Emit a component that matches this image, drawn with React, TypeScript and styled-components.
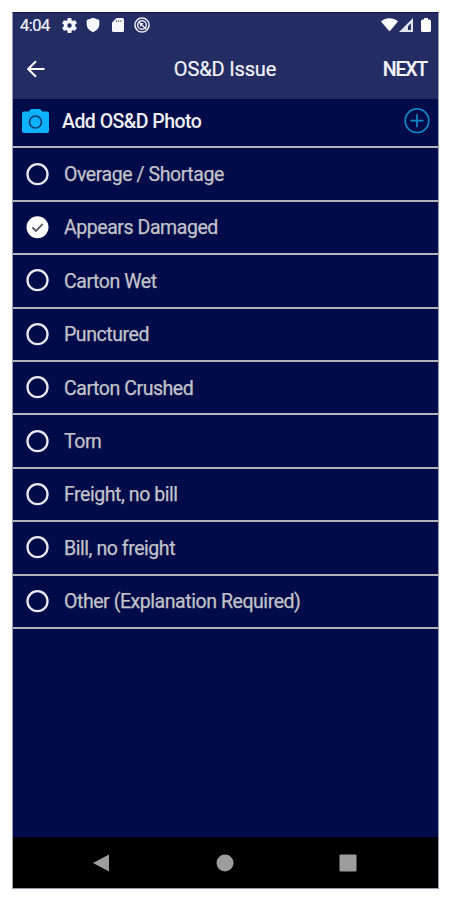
import React from 'react';
import styled, { createGlobalStyle } from 'styled-components';

const GlobalStyle = createGlobalStyle`
  * { box-sizing: border-box; }
  body { margin: 0; background: #fff; font-family: Roboto, "Liberation Sans", sans-serif; }
  svg { display: block; flex: none; }
`;

const Page = styled.div`
  width: 450px;
  height: 900px;
  padding: 12px 11px 11px 12px;
`;

const Phone = styled.main`
  width: 427px;
  height: 877px;
  display: flex;
  flex-direction: column;
  background: #000c49;
  border: 1px solid #9c9dac;
  border-top-color: #14144f;
  overflow: hidden;
`;

const Header = styled.header`
  height: 86px;
  flex: none;
  background: #232c63;
  color: #f3f3f8;
`;

const StatusBar = styled.div`
  height: 25px;
  display: flex;
  align-items: center;
  padding: 0 4px 1px 7px;
`;

const Clock = styled.span`
  width: 42px;
  font-size: 16.5px;
  line-height: 25px;
  letter-spacing: -0.5px;
  -webkit-text-stroke: 0.2px currentColor;
`;

const StatusIcons = styled.div`
  display: flex;
  align-items: center;
  gap: 8.4px;
`;

const SignalIcons = styled.div`
  display: flex;
  align-items: center;
  margin-left: auto;
`;

const TitleBar = styled.div`
  height: 61px;
  display: grid;
  grid-template-columns: 90px 1fr 90px;
  align-items: center;
  padding: 0 10px 0 14px;
`;

const BackButton = styled.button`
  padding: 0;
  border: 0;
  background: none;
  color: inherit;
  justify-self: start;
`;

const Title = styled.h1`
  margin: 0;
  padding-right: 5px;
  font-size: 20px;
  font-weight: 400;
  line-height: 24px;
  letter-spacing: -0.15px;
  text-align: center;
  -webkit-text-stroke: 0.2px currentColor;
`;

const NextButton = styled.button`
  padding: 2px 1px 0 0;
  border: 0;
  background: none;
  color: inherit;
  font: 500 19.5px/24px Roboto, sans-serif;
  letter-spacing: -1.2px;
  -webkit-text-stroke: 0.2px currentColor;
  justify-self: end;
`;

const PhotoRow = styled.div`
  height: 49.4px;
  flex: none;
  display: flex;
  align-items: center;
  padding: 0 8px 4px 9px;
  border-bottom: 2px solid #b4b4be;
`;

const PhotoLabel = styled.span`
  margin-left: 13px;
  padding-top: 2px;
  flex: 1;
  color: #eeeef2;
  font-size: 19.5px;
  font-weight: 500;
  line-height: 24px;
  letter-spacing: -0.53px;
`;

const IssueList = styled.ul`
  margin: 0;
  padding: 0;
  flex: 1;
  list-style: none;
`;

const IssueRow = styled.li`
  height: 53.4px;
  display: flex;
  align-items: center;
  padding: 0 13px;
  border-bottom: 2px solid #b4b4be;
`;

const IssueLabel = styled.span`
  margin-left: 15px;
  padding-top: 2px;
  color: #c3c3c9;
  font-size: 19.5px;
  line-height: 24px;
  letter-spacing: -0.44px;
  -webkit-text-stroke: 0.25px currentColor;
`;

const NavBar = styled.nav`
  height: 51px;
  flex: none;
  display: flex;
  align-items: center;
  justify-content: space-between;
  padding: 0 81px 0 79px;
  background: #000;
`;

const issues = [
  { label: 'Overage / Shortage' },
  { label: 'Appears Damaged', checked: true },
  { label: 'Carton Wet' },
  { label: 'Punctured' },
  { label: 'Carton Crushed' },
  { label: 'Torn' },
  { label: 'Freight, no bill' },
  { label: 'Bill, no freight' },
  { label: 'Other (Explanation Required)' },
];

const Radio = ({ checked }: { checked?: boolean }) => (
  <svg width="23" height="23" viewBox="0 0 23 23" fill="none">
    {checked ? (
      <>
        <circle cx="11.5" cy="11.2" r="11" fill="#fff" />
        <path d="M6.4 11.5l3.5 3.4 6.9-7" stroke="#555963" strokeWidth="1.8" />
      </>
    ) : (
      <circle cx="11.5" cy="11.2" r="10" stroke="#e9e9ef" strokeWidth="2.3" />
    )}
  </svg>
);

const Gear = () => (
  <svg width="15" height="15" viewBox="2 2 20 20" fill="#f5f5fa">
    <path d="M19.43 12.98c.04-.32.07-.64.07-.98s-.03-.66-.07-.98l2.11-1.65c.19-.15.24-.42.12-.64l-2-3.46c-.12-.22-.39-.3-.61-.22l-2.49 1c-.52-.4-1.08-.73-1.69-.98l-.38-2.65A.49.49 0 0 0 14 2h-4c-.25 0-.46.18-.49.42l-.38 2.65c-.61.25-1.17.59-1.69.98l-2.49-1c-.23-.09-.49 0-.61.22l-2 3.46c-.13.22-.07.49.12.64l2.11 1.65c-.04.32-.07.65-.07.98s.03.66.07.98l-2.11 1.65c-.19.15-.24.42-.12.64l2 3.46c.12.22.39.3.61.22l2.49-1c.52.4 1.08.73 1.69.98l.38 2.65c.03.24.24.42.49.42h4c.25 0 .46-.18.49-.42l.38-2.65c.61-.25 1.17-.59 1.69-.98l2.49 1c.23.09.49 0 .61-.22l2-3.46c.12-.22.07-.49-.12-.64l-2.11-1.65zM12 15A3 3 0 1 1 12 9a3 3 0 0 1 0 6z" />
  </svg>
);

const Shield = () => (
  <svg width="16" height="16" viewBox="0 0 16 16" fill="#f8f8fc">
    <path d="M8 .7 14.300 3v4.500c0 3.500-2.400 6-6.300 7.800C4.100 13.500 1.700 11 1.700 7.500V3z" />
  </svg>
);

const SdCard = () => (
  <svg width="16" height="16" viewBox="0 0 16 16">
    <path d="M6.500 1H12.500Q14 1 14 2.500V13.500Q14 15 12.500 15H3.500Q2 15 2 13.500V5.500z" fill="#f8f8fc" />
    <path d="M6.500 3.300v1.700M8.700 3.300v1.700M10.900 3.300v1.700" stroke="#5d6389" strokeWidth="1" />
  </svg>
);

const DataSaver = () => (
  <svg width="16" height="16" viewBox="0 0 17 17" fill="none" stroke="#e8e8f1">
    <circle cx="8.500" cy="8.500" r="7.500" strokeWidth="1.700" />
    <circle cx="8.500" cy="8.500" r="4.600" strokeWidth="1.600" />
    <path d="M4.700 4.700l8.200 8.200M7 10V7h2.800" strokeWidth="1.500" />
  </svg>
);

export default function App() {
  return (
    <>
      <GlobalStyle />
      <Page>
        <Phone>
          <Header>
            <StatusBar>
              <Clock>4:04</Clock>
              <StatusIcons>
                <Gear />
                <Shield />
                <SdCard />
                <DataSaver />
              </StatusIcons>
              <SignalIcons>
                <svg width="17" height="16" viewBox="0 0 17 16">
                  <path d="M0 4.500C4.700.2 12.300.2 17 4.500L8.500 14.500z" fill="#fff" />
                </svg>
                <svg width="16" height="16" viewBox="0 0 16 16">
                  <path d="M15 1v14H1z" fill="#e2e3ed" />
                  <path d="M12.900 6.300v6.700H10V9.200z" fill="#232c63" />
                </svg>
                <svg width="20" height="16" viewBox="0 0 20 16">
                  <path d="M8.500 2.500h1.500V1h4v1.500h1.500Q17 2.500 17 4.500V13.500Q17 15 15.500 15h-7Q7 15 7 13.500V4.500Q7 2.500 8.500 2.500z" fill="#fff" />
                </svg>
              </SignalIcons>
            </StatusBar>
            <TitleBar>
              <BackButton aria-label="Back">
                <svg width="18" height="18" viewBox="0 0 18 18" fill="none" stroke="#fff" strokeWidth="2">
                  <path d="M17.500 9H1.500M9 1.200L1.200 9 9 16.800" />
                </svg>
              </BackButton>
              <Title>OS&amp;D Issue</Title>
              <NextButton>NEXT</NextButton>
            </TitleBar>
          </Header>
          <PhotoRow>
            <svg width="27" height="24" viewBox="0 0 27 24">
              <path d="M9 0h9l2.300 2.500H25q2 0 2 2V22q0 2-2 2H2q-2 0-2-2V4.500q0-2 2-2h4.700z" fill="#0cb2fb" />
              <circle cx="13.500" cy="13" r="6" fill="none" stroke="#063a70" strokeWidth="1.700" />
            </svg>
            <PhotoLabel>Add OS&amp;D Photo</PhotoLabel>
            <svg width="26" height="26" viewBox="0 0 26 26" fill="none" stroke="#1388c4" strokeWidth="1.700">
              <circle cx="13" cy="12.700" r="11.800" />
              <path d="M13 6.200v13M6.500 12.700h13" />
            </svg>
          </PhotoRow>
          <IssueList>
            {issues.map((issue) => (
              <IssueRow key={issue.label}>
                <Radio checked={issue.checked} />
                <IssueLabel>{issue.label}</IssueLabel>
              </IssueRow>
            ))}
          </IssueList>
          <NavBar>
            <svg width="18" height="18" viewBox="0 0 18 18" fill="#9d9d9d">
              <path d="M17 .5v17L1 9z" />
            </svg>
            <svg width="18" height="18" viewBox="0 0 18 18" fill="#9d9d9d">
              <circle cx="9" cy="9" r="8.500" />
            </svg>
            <svg width="18" height="18" viewBox="0 0 18 18" fill="#9d9d9d">
              <rect x=".5" y=".5" width="17" height="17" rx="1" />
            </svg>
          </NavBar>
        </Phone>
      </Page>
    </>
  );
}
